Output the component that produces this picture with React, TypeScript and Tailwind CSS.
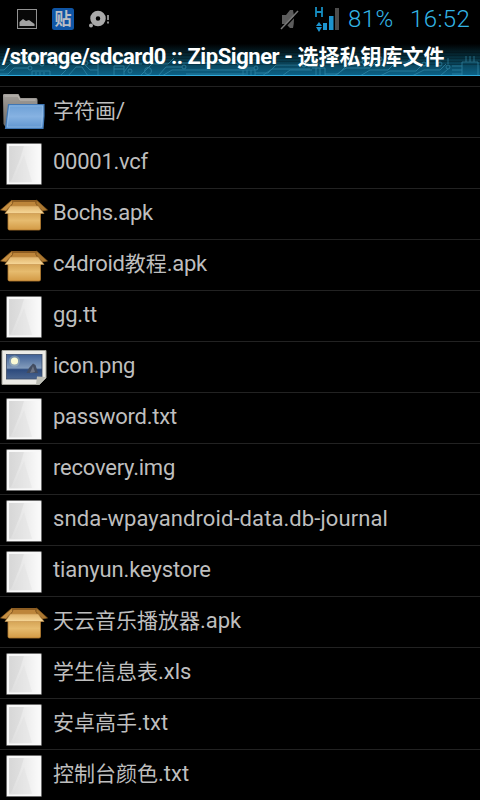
import React from "react";

type Kind = "folder" | "file" | "box" | "image";

const files: { name: string; kind: Kind; track?: string }[] = [
  { name: "字符画/", kind: "folder" },
  { name: "00001.vcf", kind: "file", track: "tracking-[-0.27px]" },
  { name: "Bochs.apk", kind: "box", track: "tracking-[-0.28px]" },
  { name: "c4droid教程.apk", kind: "box", track: "tracking-[-0.3px]" },
  { name: "gg.tt", kind: "file", track: "tracking-[-0.2px]" },
  { name: "icon.png", kind: "image", track: "tracking-[-0.25px]" },
  { name: "password.txt", kind: "file", track: "tracking-[-0.25px]" },
  { name: "recovery.img", kind: "file", track: "tracking-[-0.22px]" },
  { name: "snda-wpayandroid-data.db-journal", kind: "file", track: "tracking-[0.09px]" },
  { name: "tianyun.keystore", kind: "file", track: "tracking-[-0.12px]" },
  { name: "天云音乐播放器.apk", kind: "box" },
  { name: "学生信息表.xls", kind: "file" },
  { name: "安卓高手.txt", kind: "file" },
  { name: "控制台颜色.txt", kind: "file" },
];

function FolderIcon() {
  return (
    <svg viewBox="0 0 48 50" className="w-12 h-[50px]">
      <path d="M3 8Q3 7 4.500 7H18.500L20.500 11H36Q37.500 11 37.500 13V40H5.500L3.500 37Z" fill="url(#folderBack)" />
      <path d="M4.500 9H18L20 13H35.500" fill="none" stroke="#bdb9b4" strokeWidth="1" />
      <path d="M8.500 17.500H44Q44.500 29 43 41.500H5.500Z" fill="url(#folder)" stroke="#3f76b3" strokeWidth="1.200" />
      <path d="M9.700 19H42.500Q42.500 29 41.500 40H7.300Z" fill="none" stroke="#9dc3ea" strokeWidth=".8" opacity=".7" />
    </svg>
  );
}

function FileIcon() {
  return (
    <svg viewBox="0 0 48 50" className="w-12 h-[50px]">
      <rect x="6" y="5" width="36" height="42" rx="1.500" fill="#6e6e6e" />
      <rect x="7" y="6" width="34" height="40" rx=".5" fill="#f8f8f8" />
      <rect x="9" y="8" width="30.500" height="36.500" fill="url(#paper)" />
      <path d="M9 8H24L20 21L11 43H9Z" fill="#cfcfcf" opacity=".35" />
      <path d="M24 17L32 44H13Z" fill="#dcdcdc" opacity=".35" />
    </svg>
  );
}

function BoxIcon() {
  return (
    <svg viewBox="0 0 48 50" className="w-12 h-[50px]">
      <path d="M12 11H36.500L40 19H8Z" fill="#8d5d22" />
      <path d="M13.500 13H35L37 18H11Z" fill="#bd853a" />
      <path d="M8 22H40.500V39.500Q40.500 41 39 41H9.500Q8 41 8 39.500Z" fill="url(#box)" stroke="#b27a2d" strokeWidth=".8" />
      <path d="M12 11L12.500 14.500L6 22L.5 21Z" fill="#c68f42" stroke="#84571f" strokeWidth=".7" />
      <path d="M36.500 11L36 14.500L42.500 22L47.500 21Z" fill="#ac7830" stroke="#84571f" strokeWidth=".7" />
      <path d="M10.500 17H38L44 24.500H5Z" fill="url(#lip)" stroke="#c4914a" strokeWidth=".6" />
    </svg>
  );
}

function ImageIcon() {
  return (
    <svg viewBox="0 0 48 50" className="w-12 h-[50px]">
      <path d="M2 8.500H46V36L39.500 42.500H2Z" fill="#ecebe6" stroke="#a3a39b" strokeWidth="1" />
      <rect x="6.500" y="12.500" width="35.500" height="24.500" fill="url(#sea)" stroke="#3c4b66" strokeWidth=".8" />
      <circle cx="14.500" cy="19" r="5.500" fill="#c8d7c2" opacity=".35" />
      <circle cx="14.500" cy="19" r="3.600" fill="#fafad4" />
      <path d="M26.500 31L29 26L33 21.500L35.500 23L38 31Z" fill="#424c60" />
      <path d="M30 31L33 24L35 30" fill="#6d7484" />
      <path d="M37 34.500L46 35L39.500 42.500L36 42.500Z" fill="#bcbdb5" />
    </svg>
  );
}

const icons = { folder: FolderIcon, file: FileIcon, box: BoxIcon, image: ImageIcon };

// Latin runs are set one pixel larger than the Chinese ones
function FileName({ name, track = "" }: { name: string; track?: string }) {
  return (
    <span className="ml-[5px] whitespace-nowrap text-[21px]/[47px] text-[#bebebe]">
      {name.split(/([\x20-\x7e]+)/).map((run, i) =>
        i % 2 ? <span key={i} className={`text-[22px] ${track}`}>{run}</span> : run
      )}
    </span>
  );
}

function Circuit() {
  return (
    <svg viewBox="0 0 480 38" className="absolute inset-0 w-full h-full">
      <rect width="480" height="38" fill="url(#glow)" />
      <path d="M0 14.500H480M0 17.500H480M0 20.500H480M0 23.500H480M0 26.500H480" stroke="#000" opacity=".2" />
      <g fill="none" stroke="#3b93b3" strokeWidth="1" opacity=".6">
        <path d="M0 32H4L10 26H40M0 36H8L14 30H28M10 22H24L28 18H48M50 18L56 24V28M64 30L70 24H82L90 32H98M68 38L76 29H82L88 38M32 38V33H50V38M36 38V34M40 38V34M44 38V34" />
        <path d="M60 38L66 32M98 18V38M114 38V28H124V38M114 31H124M124 34L130 26H142M140 38L152 26H168L174 20M158 38L166 29H182M162 38L172 32H240M186 36H246M178 25H236L242 30H254" />
        <path d="M240 32H255V38M243 32V38M247 32V38M251 32V38M255 35H268L276 27H302M262 38L272 31H310M282 38L290 32H312M312 30H325V38M316 30V38M320 30V38" />
        <path d="M325 36H338L350 24H362L368 18M334 38L346 30H370L378 22M360 38L370 32H388L396 24H408M380 38L390 33H416L422 27M398 38H412L424 32H440L446 26" />
        <path d="M462 24H478V38M462 38V24M452 28H462M452 32H462M452 36H462M466 24V18M470 24V18M474 24V18M440 38L448 31M448 20V26" />
        <circle cx="12" cy="22" r="2" /><circle cx="42" cy="26" r="2" /><circle cx="30" cy="30" r="2" /><circle cx="50" cy="18" r="2" /><circle cx="86" cy="25" r="2" /><circle cx="130" cy="33" r="2" /><circle cx="148" cy="33" r="3.500" /><circle cx="184" cy="29" r="2" /><circle cx="256" cy="30" r="2" /><circle cx="304" cy="27" r="2" /><circle cx="364" cy="24" r="2" /><circle cx="380" cy="21" r="2" /><circle cx="410" cy="24" r="2" /><circle cx="424" cy="26" r="2" /><circle cx="440" cy="26" r="2" /><circle cx="448" cy="29" r="2" />
      </g>
      <rect y="37" width="480" height="1" fill="#2fa9da" />
    </svg>
  );
}

function StatusBar() {
  return (
    <div className="flex h-[38px] items-center">
      <svg viewBox="0 0 270 38" className="w-[270px] h-[38px] shrink-0">
        <rect x="17.500" y="9.500" width="19" height="19" fill="#080808" stroke="#929292" />
        <path d="M19.500 26V22L23 19L26 21L29 20L34.500 24V26Z" fill="#a2a2a2" />
        <rect x="52" y="8" width="22" height="22" rx="2.500" fill="#0f55a5" />
        <text x="54.500" y="25" fontSize="17" fontWeight="700" fill="#b9bec5" fontFamily="Noto Sans CJK SC, sans-serif">贴</text>
        <circle cx="98" cy="18.500" r="5" fill="none" stroke="#aaa" strokeWidth="5.500" />
        <circle cx="91" cy="25.500" r="2" fill="#aaa" />
        <path d="M108 15V20M108 21.500V23.500" stroke="#999" strokeWidth="1.800" />
      </svg>
      <svg viewBox="270 0 72 38" className="w-[72px] h-[38px] shrink-0">
        <path d="M282 15H286L290 10H293Q295 19 293 28H290L286 24H282Z" fill="#5c5c5c" />
        <path d="M282 30L299 12" stroke="#000" strokeWidth="1.500" />
        <path d="M281 29L298 11" stroke="#777" strokeWidth="1.500" />
        <path d="M316 7V17M322 7V17M316 12H322" stroke="#168dc0" strokeWidth="1.800" />
        <path d="M323 23H327V30H323ZM329 16H333.500V30H329Z" fill="#1d94cf" />
        <path d="M335 8H339V30H335Z" fill="#4c4c4c" />
        <path d="M319 22L322 26H316ZM316 27H322L319 32Z" fill="#1d94cf" />
      </svg>
      <span className="ml-[6px] w-[62px] whitespace-nowrap text-2xl/[38px] font-light tracking-[0.4px] text-[#33b5e5]">81%</span>
      <span className="whitespace-nowrap text-2xl/[38px] font-light tracking-[0.4px] text-[#33b5e5]">16:52</span>
    </div>
  );
}

export default function App() {
  return (
    <div className="h-[800px] w-[480px] overflow-hidden bg-black font-['Roboto','Noto_Sans_CJK_SC',sans-serif]">
      {/* Shared gradients */}
      <svg className="absolute size-0">
        <defs>
          <linearGradient id="folderBack" x2="0" y2="1"><stop stopColor="#a39f9a" /><stop offset="1" stopColor="#6b6966" /></linearGradient>
          <linearGradient id="folder" x2="0" y2="1"><stop stopColor="#6c9fd5" /><stop offset=".5" stopColor="#86b2e2" /><stop offset="1" stopColor="#5e94cf" /></linearGradient>
          <linearGradient id="paper"><stop stopColor="#dcdcdc" /><stop offset="1" stopColor="#fafafa" /></linearGradient>
          <linearGradient id="box" x2="0" y2="1"><stop stopColor="#cf9c4e" /><stop offset=".5" stopColor="#e6bb6e" /><stop offset="1" stopColor="#d39a45" /></linearGradient>
          <linearGradient id="lip" x2="0" y2="1"><stop stopColor="#e0b46c" /><stop offset="1" stopColor="#f6d798" /></linearGradient>
          <linearGradient id="sea" x2="0" y2="1"><stop stopColor="#406196" /><stop offset=".55" stopColor="#829bbb" /><stop offset=".62" stopColor="#2c4a7d" /><stop offset="1" stopColor="#4b6690" /></linearGradient>
          <linearGradient id="glow" x2="0" y2="1"><stop offset=".15" stopColor="#000" /><stop offset=".6" stopColor="#083b4d" /><stop offset="1" stopColor="#0c648a" /></linearGradient>
        </defs>
      </svg>
      <StatusBar />
      <header className="relative h-[38px]">
        <Circuit />
        <h1 className="relative whitespace-nowrap pl-[2px] text-[21px]/[38px] font-bold text-white">
          <span className="text-[22px] tracking-[-0.44px]">/storage/sdcard0 :: ZipSigner - </span>选择私钥库文件
        </h1>
      </header>
      <ul className="mt-[10px] border-t border-[#222]">
        {files.map((file) => {
          const Icon = icons[file.kind];
          return (
            <li key={file.name} className="flex h-[51px] border-b border-[#222]">
              <Icon />
              <FileName name={file.name} track={file.track} />
            </li>
          );
        })}
      </ul>
    </div>
  );
}
